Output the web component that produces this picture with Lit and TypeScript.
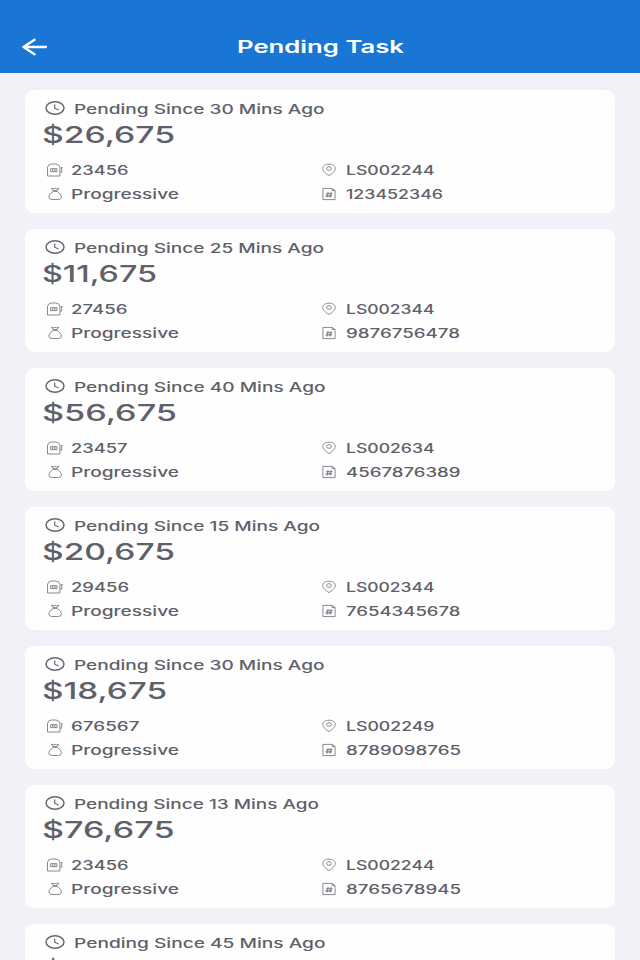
import { LitElement, html, css, svg } from "lit";
import { customElement, property } from "lit/decorators.js";

/** One line of text stretched to a given width. */
@customElement("wide-text")
export class WideText extends LitElement {
  @property() text = "";
  @property({ type: Number }) width = 100;
  @property({ type: Number }) size = 13;
  @property({ type: Number }) weight = 500;

  static styles = css`
    :host { display: block; flex: none; }
    svg { display: block; overflow: visible; }
    text { font-family: Inter, "Noto Sans", sans-serif; fill: currentColor; }
  `;

  render() {
    const h = this.size;
    return html`<svg width=${this.width} height=${h}>
      ${svg`<text x="0" y=${h * 0.92} font-size=${this.size} font-weight=${this.weight}
        textLength=${this.width} lengthAdjust="spacingAndGlyphs">${this.text}</text>`}
    </svg>`;
  }
}

interface Task {
  mins: number; sinceW: number;
  amount: string; amountW: number;
  machine: string; machineW: number;
  place: string;
  serial: string; serialW: number;
}

const t = (mins: number, sinceW: number, amount: string, amountW: number, machine: string, machineW: number,
  place: string, serial: string, serialW: number): Task =>
  ({ mins, sinceW, amount, amountW, machine, machineW, place, serial, serialW });

const tasks: Task[] = [
  t(30, 250.5, "$26,675", 133, "23456", 57.5, "LS002244", "123452346", 97),
  t(25, 250, "$11,675", 115, "27456", 56.5, "LS002344", "9876756478", 114),
  t(40, 251.5, "$56,675", 135, "23457", 56.5, "LS002634", "4567876389", 114.5),
  t(15, 246, "$20,675", 133, "29456", 58, "LS002344", "7654345678", 114.5),
  t(30, 250.5, "$18,675", 125, "676567", 68.5, "LS002249", "8789098765", 115),
  t(13, 245, "$76,675", 132.5, "23456", 57.5, "LS002244", "8765678945", 115),
  t(45, 251.5, "$46,675", 136, "23456", 57.5, "LS002244", "8765678945", 115),
];

const clock = html`<svg class="clock" width="20" height="14" viewBox="0 0 20 14">
  <ellipse cx="10" cy="7" rx="9" ry="6.2" stroke-width="1.5"/><path d="M9.7 3.4V7.2L13.6 9" stroke-width="1.2"/></svg>`;
const machineIcon = html`<svg width="18" height="14" viewBox="0 0 18 14">
  <path d="M1.500 13V4.200Q2.200 1.200 5.500 1h4.400q3.300.2 4 3.200V13Z"/>
  <path d="M4.600 5.700h6.400v2.900H4.600ZM6.800 5.700v2.900M8.900 5.700v2.900"/><path d="M14.200 9.200h1.500V5M14.800 4.600h1.900"/></svg>`;
const bagIcon = html`<svg width="18" height="14" viewBox="0 0 18 14">
  <path d="M5.500 1.200 7.100 3.600h4L12.900 1.200 10.700 1.900 9.200 1.200 7.600 1.900ZM6.800 4.400h4.800M7 4.500Q2.800 7.300 2.800 9.800q0 2.700 3.300 2.700h6.300q3.100 0 3.100-2.700 0-2.500-4.100-5.300"/></svg>`;
const pinIcon = html`<svg width="14" height="14" viewBox="0 0 14 14">
  <path d="M7 12.500C4 11 .7 8 .7 5.500.7 2.800 3.500 1.200 7 1.200s6.300 1.600 6.300 4.300C13.300 8 10 11 7 12.500Z"/><ellipse cx="7" cy="5.500" rx="2.400" ry="1.800"/></svg>`;
const hashIcon = html`<svg width="14" height="14" viewBox="0 0 14 14">
  <path d="M.9 1.400h9.200l3 2.200v9H.9ZM10.100 1.400v2.200h3"/>
  <path d="M6.200 5.100 5 10.500M9.200 5.100 8 10.500M4 6.700h6.600M3.500 8.900h6.600" stroke-width="1.1"/></svg>`;

@customElement("task-card")
export class TaskCard extends LitElement {
  @property({ attribute: false }) task!: Task;

  static styles = css`
    :host { display: block; box-sizing: border-box; height: 122.6px; border-radius: 9px; background: #fefefe; color: #5f6069; padding: 10.8px 18px 0 20px; }
    svg { display: block; flex: none; fill: none; stroke: #7c7d86; stroke-width: .9; }
    .clock { stroke: #666771; }
    .since { display: flex; align-items: center; gap: 9px; height: 14px; }
    .amount { margin: 5.9px 0 0 -3px; height: 24px; }
    .grid { display: grid; grid-template-columns: 276px 1fr; grid-template-rows: 14px 14px; row-gap: 10px; margin: 17.6px 0 0 .7px; }
    .cell { display: flex; align-items: center; gap: 7.5px; }
    .cell.right { gap: 10px; }
  `;

  render() {
    const k = this.task;
    return html`
      <div class="since">${clock}<wide-text .text=${`Pending Since ${k.mins} Mins Ago`} .width=${k.sinceW}></wide-text></div>
      <wide-text class="amount" .text=${k.amount} .width=${k.amountW} .size=${23.5}></wide-text>
      <div class="grid">
        <div class="cell">${machineIcon}<wide-text .text=${k.machine} .width=${k.machineW}></wide-text></div>
        <div class="cell right">${pinIcon}<wide-text .text=${k.place} .width=${88.5}></wide-text></div>
        <div class="cell">${bagIcon}<wide-text .text=${"Progressive"} .width=${108}></wide-text></div>
        <div class="cell right">${hashIcon}<wide-text .text=${k.serial} .width=${k.serialW}></wide-text></div>
      </div>`;
  }
}

@customElement("app-root")
export class AppRoot extends LitElement {
  static styles = css`
    :host { display: block; height: 960px; overflow: hidden; background: #f2f1f8; }
    header { box-sizing: border-box; height: 73px; padding: 20px 22px 0; background: #1976d4; color: #fff;
      display: grid; grid-template-columns: 26px 1fr 26px; align-items: center; }
    .back { display: block; margin-top: 1px; fill: none; stroke: #fff; stroke-width: 2.3; stroke-linecap: round; stroke-linejoin: round; }
    .title { justify-self: center; margin-top: -2px; }
    main { display: flex; flex-direction: column; gap: 16.4px; padding: 17.4px 25px 0; }
    task-card { flex: none; }
  `;

  render() {
    return html`
      <header>
        <svg class="back" width="26" height="18" viewBox="0 0 26 18"><path d="M24 9H1.500M12.500 1.800 1.500 9l11 7.200"/></svg>
        <wide-text class="title" .text=${"Pending Task"} .width=${167} .size=${17} .weight=${600}></wide-text>
      </header>
      <main>${tasks.map((k) => html`<task-card .task=${k}></task-card>`)}</main>`;
  }
}
